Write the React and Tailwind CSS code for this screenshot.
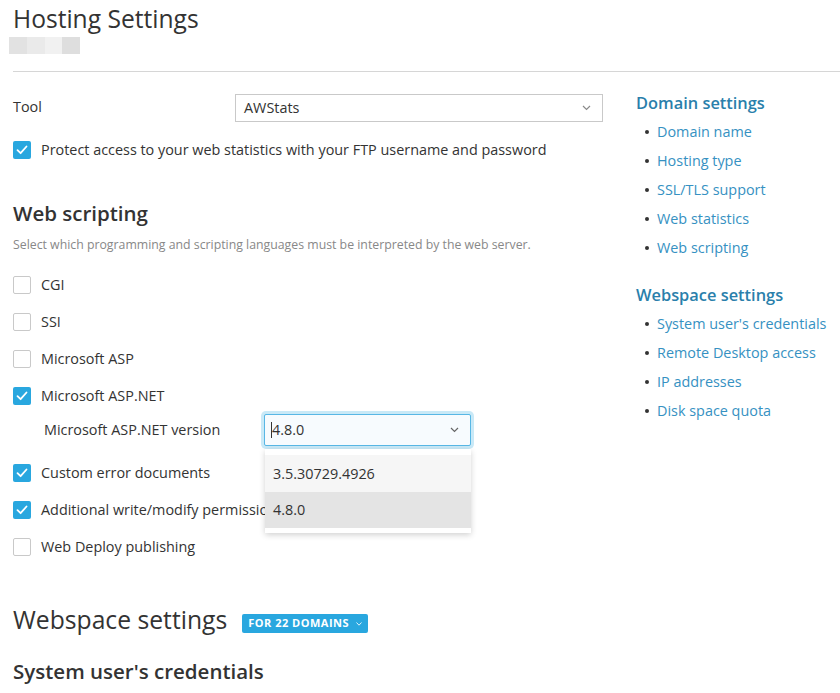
import React from "react";

function Check({ checked }) {
  if (checked) {
    return (
      <span className="flex h-[18px] w-[18px] shrink-0 items-center justify-center rounded-[2px] bg-[#29a7df]">
        <svg width="12" height="10" viewBox="0 0 12 10" fill="none">
          <path d="M1.5 5.2 L4.6 8.2 L10.5 1.5" stroke="#fff" strokeWidth="1.8" strokeLinecap="round" strokeLinejoin="round" />
        </svg>
      </span>
    );
  }
  return <span className="h-[18px] w-[18px] shrink-0 rounded-[2px] border border-[#c9c9c9] bg-white" />;
}

function Chevron({ color = "#8a8a8a" }) {
  return (
    <svg width="9" height="6" viewBox="0 0 9 6" fill="none">
      <path d="M1 1 L4.5 4.5 L8 1" stroke={color} strokeWidth="1.2" />
    </svg>
  );
}

function CheckRow({ checked, label }) {
  return (
    <div className="flex h-[37px] items-center gap-[10px]">
      <Check checked={checked} />
      <span className="whitespace-nowrap text-[14.4px] text-[#333]">{label}</span>
    </div>
  );
}

export default function App() {
  const domainLinks = ["Domain name", "Hosting type", "SSL/TLS support", "Web statistics", "Web scripting"];
  const webspaceLinks = ["System user's credentials", "Remote Desktop access", "IP addresses", "Disk space quota"];
  return (
    <div className="h-[693px] w-[840px] overflow-hidden bg-white pl-[13px] text-[#333]" style={{ fontFamily: "'Open Sans', sans-serif" }}>
      <h1 className="pt-[4px] text-[24.6px] leading-[30px] font-normal text-[#333]">Hosting Settings</h1>
      <div className="-ml-[4px] mt-[3px] flex h-[17px]">
        <span className="w-[18px] bg-[#e2e2e2]" />
        <span className="w-[18px] bg-[#eaeaea]" />
        <span className="w-[17px] bg-[#f1f1f1]" />
        <span className="w-[18px] bg-[#dedede]" />
      </div>
      <div className="mt-[17px] h-px bg-[#d6d6d6]" />

      <div className="mt-[16px] flex items-start">
        <div className="relative w-[590px] pt-[6px]">
          <div className="flex items-center">
            <span className="w-[222px] pb-[3px] text-[14.4px]">Tool</span>
            <div className="flex h-[28px] w-[368px] items-center justify-between border border-[#c9c9c9] bg-white pl-[8px] pr-[11px] text-[14.4px]">
              <span>AWStats</span>
              <Chevron />
            </div>
          </div>
          <div className="mt-[19px] flex h-[18px] items-center gap-[10px]">
            <Check checked />
            <span className="text-[14.4px]">Protect access to your web statistics with your FTP username and password</span>
          </div>

          <h2 className="mt-[41px] text-[20.5px] leading-[26px] font-semibold text-[#333]">Web scripting</h2>
          <p className="mt-[11px] whitespace-nowrap text-[12.3px] leading-[16px] text-[#888]">
            Select which programming and scripting languages must be interpreted by the web server.
          </p>

          <div className="mt-[13px]">
            <CheckRow label="CGI" />
            <CheckRow label="SSI" />
            <CheckRow label="Microsoft ASP" />
            <CheckRow checked label="Microsoft ASP.NET" />
            <div className="relative flex h-[32px] items-center">
              <span className="w-[251px] pl-[31px] text-[14.4px]">Microsoft ASP.NET version</span>
              <div className="relative">
                <div className="flex h-[32px] w-[207px] items-center justify-between rounded-[2px] border border-[#58b7e5] bg-[#f7fbfe] pl-[6px] pr-[11px] text-[14.4px] shadow-[0_0_0_3px_rgba(41,167,223,0.25)]">
                  <span className="flex items-center">
                    <span className="mr-[1px] h-[16px] w-px bg-[#333]" />
                    <span className="-ml-[1px]">4.8.0</span>
                  </span>
                  <Chevron color="#666" />
                </div>
                <div className="absolute left-[1px] top-[35px] z-10 w-[206px] bg-white pt-[6px] pb-[5px] text-[14.4px] shadow-[0_2px_6px_rgba(0,0,0,0.18)]">
                  <div className="flex h-[37px] items-center bg-[#f6f6f6] pl-[8px]">3.5.30729.4926</div>
                  <div className="flex h-[36px] items-center bg-[#e4e4e4] pl-[8px]">4.8.0</div>
                </div>
              </div>
            </div>
            <div className="mt-[8px]">
              <CheckRow checked label="Custom error documents" />
              <CheckRow checked label="Additional write/modify permissions" />
              <CheckRow label="Web Deploy publishing" />
            </div>
          </div>

          <div className="mt-[39px] flex items-center">
            <h2 className="text-[24.7px] leading-[32px] font-normal text-[#333]">Webspace settings</h2>
            <span className="ml-[15px] mt-[7px] flex h-[19px] items-center gap-[7px] rounded-[2px] bg-[#29a7df] px-[6px] text-[11px] font-bold tracking-[0.5px] text-white">
              FOR 22 DOMAINS
              <svg width="6" height="4" viewBox="0 0 6 4"><path d="M0.5 0.5 L3 3.2 L5.5 0.5" stroke="#dff2fb" strokeWidth="1" fill="none" /></svg>
            </span>
          </div>
          <h2 className="mt-[22px] text-[20.5px] leading-[26px] font-semibold text-[#333]">System user's credentials</h2>
        </div>

        <div className="ml-[33px] shrink-0">
          <div className="text-[16.4px] leading-[29px] font-semibold text-[#2a7fab]">Domain settings</div>
          <ul>
            {domainLinks.map((l) => (
              <li key={l} className="flex h-[29px] items-center text-[14.4px] text-[#3691c2]">
                <span className="ml-[9px] mr-[8px] h-[4px] w-[4px] rounded-full bg-[#333]" />
                {l}
              </li>
            ))}
          </ul>
          <div className="mt-[18px] text-[16.4px] leading-[29px] font-semibold text-[#2a7fab]">Webspace settings</div>
          <ul>
            {webspaceLinks.map((l) => (
              <li key={l} className="flex h-[29px] items-center whitespace-nowrap text-[14.4px] text-[#3691c2]">
                <span className="ml-[9px] mr-[8px] h-[4px] w-[4px] rounded-full bg-[#333]" />
                {l}
              </li>
            ))}
          </ul>
        </div>
      </div>
    </div>
  );
}
